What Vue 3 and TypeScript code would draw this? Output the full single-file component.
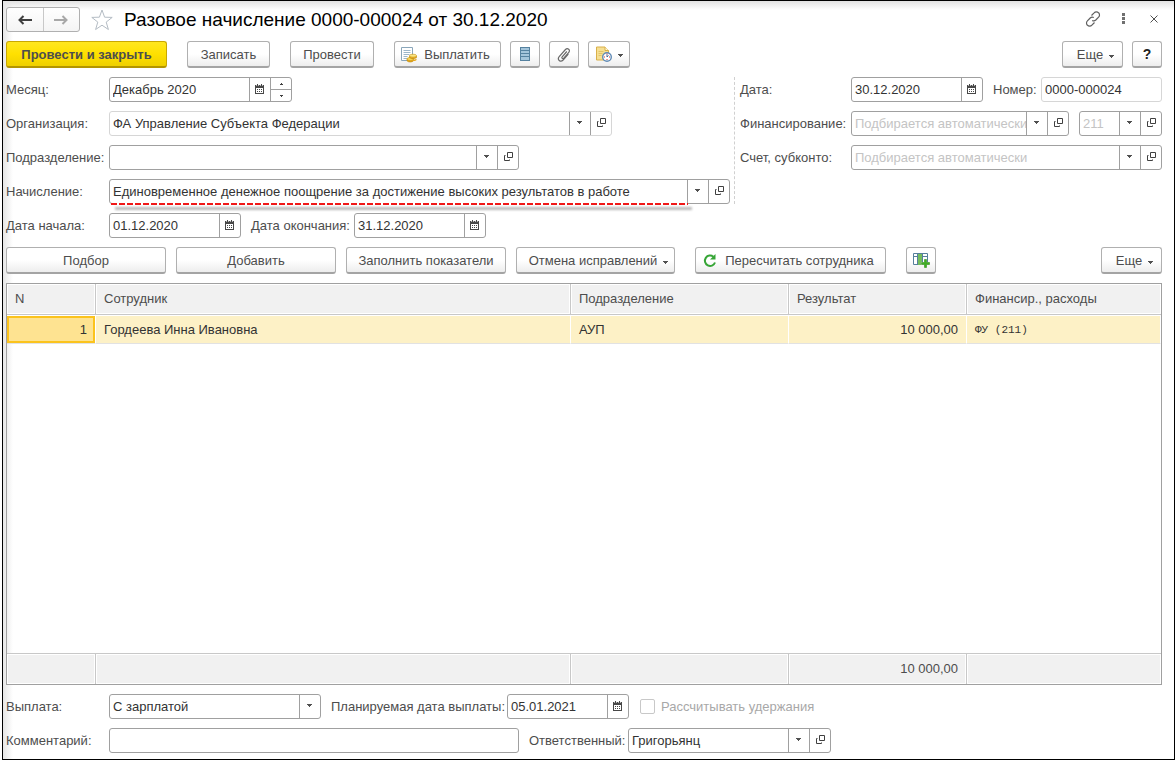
<script setup lang="ts">
import { ref } from 'vue'

interface Row {
  n: number
  employee: string
  department: string
  result: string
  financing: string
}

const rows: Row[] = [
  { n: 1, employee: 'Гордеева Инна Ивановна', department: 'АУП', result: '10 000,00', financing: 'ФУ (211)' },
]

const month = ref('Декабрь 2020')
const organization = ref('ФА Управление Субъекта Федерации')
const department = ref('')
const accrual = ref('Единовременное денежное поощрение за достижение высоких результатов в работе')
const startDate = ref('01.12.2020')
const endDate = ref('31.12.2020')
const docDate = ref('30.12.2020')
const docNumber = ref('0000-000024')
const payment = ref('С зарплатой')
const plannedDate = ref('05.01.2021')
const comment = ref('')
const responsible = ref('Григорьянц')
</script>

<template>
  <svg class="defs" aria-hidden="true">
    <symbol id="i-cal" viewBox="0 0 9 10">
      <path d="M0 1h9v9H0z M1 4v5h7V4z" fill="#484848" fill-rule="evenodd" />
      <path d="M2 0h1v2H2z M6 0h1v2H6z M2 5h1v1H2z M4 5h1v1H4z M6 5h1v1H6z M2 7h1v1H2z M4 7h1v1H4z M6 7h1v1H6z" fill="#484848" />
      <path d="M1 1h1v1H1z M3 1h1v1H3z M5 1h1v1H5z M7 1h1v1H7z" fill="#b8b8b8" />
    </symbol>
    <symbol id="i-open" viewBox="0 0 9 9">
      <path d="M3.500 .5h5v5h-5z M1.500 3.500h-1v5h5v-1" fill="none" stroke="#404040" />
    </symbol>
    <symbol id="i-down" viewBox="0 0 5 3">
      <path d="M0 0h5v1H4v1H3v1H2V2H1V1H0z" fill="#505050" />
    </symbol>
  </svg>
  <main class="window">
    <header class="title-bar">
      <div class="nav">
        <button type="button" aria-label="Назад">
          <svg width="14" height="10" viewBox="0 0 14 10"><path d="M1.500 5H14M5.500 1L1.500 5l4 4" fill="none" stroke="#404040" stroke-width="2" /></svg>
        </button>
        <button type="button" aria-label="Вперед">
          <svg width="14" height="10" viewBox="0 0 14 10"><path d="M0 5h12.500M8.500 1l4 4-4 4" fill="none" stroke="#a8a8a8" stroke-width="2" /></svg>
        </button>
      </div>
      <button type="button" class="plain star" aria-label="Избранное">
        <svg width="22" height="22" viewBox="0 0 22 22"><path d="M11 1l2.600 7.200 7.600.2-6 4.700 2.200 7.400L11 16.200l-6.400 4.300 2.200-7.400-6-4.700 7.600-.2z" fill="#fff" stroke="#b4bcc4" /></svg>
      </button>
      <h1>Разовое начисление 0000-000024 от 30.12.2020</h1>
      <div class="window-tools">
        <button type="button" class="plain" aria-label="Ссылка">
          <svg width="16" height="16" viewBox="0 0 16 16" fill="none" stroke="#606060" stroke-width="1.200"><path d="M6.500 4.500l2.600-2.700a3 3 0 0 1 4.500 0 3 3 0 0 1 0 4.300L10.800 9a3 3 0 0 1-3.600.4" /><path d="M9.500 11.500l-2.600 2.700a3 3 0 0 1-4.500 0 3 3 0 0 1 0-4.300L5.200 7a3 3 0 0 1 3.600-.4" /></svg>
        </button>
        <button type="button" class="plain" aria-label="Меню">
          <svg width="3" height="11" viewBox="0 0 3 11"><path d="M0 0h3v3H0z M0 4h3v3H0z M0 8h3v3H0z" fill="#707070" /></svg>
        </button>
        <button type="button" class="plain close" aria-label="Закрыть">
          <svg width="8" height="8" viewBox="0 0 8 8"><path d="M.5.5l7 7M7.500.5l-7 7" stroke="#505050" /></svg>
        </button>
      </div>
    </header>

    <div class="toolbar">
      <button type="button" class="btn primary">Провести и закрыть</button>
      <button type="button" class="btn mid">Записать</button>
      <button type="button" class="btn mid">Провести</button>
      <div class="group">
        <button type="button" class="btn pay">
          <svg width="16" height="16" viewBox="0 0 16 16">
            <path d="M.5 .5h11v13H.5z" fill="#fff" stroke="#8aa6ba" />
            <path d="M2.500 3.500h7M2.500 5.500h7M2.500 7.500h6M2.500 9.500h4M2.500 11.500h4" stroke="#9db7ca" />
            <path d="M6 12.300v1.500c1 1.600 5.500 1.600 6.500 0v-1.500z" fill="#e9a91c" stroke="#b98305" stroke-width=".6" />
            <ellipse cx="9.200" cy="12" rx="3.300" ry="1.400" fill="#fbdc62" stroke="#c48f0b" stroke-width=".6" />
            <path d="M8.500 9v1.500c1 1.500 6 1.500 7 0V9z" fill="#e9a91c" stroke="#b98305" stroke-width=".6" />
            <ellipse cx="12" cy="8.700" rx="3.500" ry="1.500" fill="#fce680" stroke="#c48f0b" stroke-width=".6" />
            <path d="M12.500 12.500c1.500 0 2.500-.4 3-1v1.500c-.5.800-1.500 1-3 1z" fill="#e9a91c" />
          </svg>
          <span>Выплатить</span>
        </button>
        <button type="button" class="btn icon" aria-label="Список">
          <svg width="10" height="14" viewBox="0 0 10 14"><path d="M0 0h10v14H0z" fill="#55819f" /><path d="M1 1h8v2H1z M1 4h8v2H1z M1 7h8v2H1z M1 10h8v3H1z" fill="#a3c4da" /></svg>
        </button>
        <button type="button" class="btn icon" aria-label="Файлы">
          <svg width="14" height="15" viewBox="0 0 14 15" fill="none" stroke="#6a6a6a" stroke-width="1.200"><path d="M9.800 4.500L5.200 9.800c-1 1.200.6 2.500 1.600 1.400l5-5.900c2-2.400-1.300-5-3.300-2.800L2.200 9.600c-2.400 3 1.300 6.200 3.900 3.400l5.200-6" /></svg>
        </button>
        <button type="button" class="btn report" aria-label="Отчеты">
          <svg width="16" height="16" viewBox="0 0 16 16">
            <path d="M.5 1h8.500l3.500 3.500v9.500H.5z" fill="#f6df92" stroke="#d9b04a" />
            <path d="M9 1v3.500h3.500" fill="#fff6d4" stroke="#d9b04a" />
            <path d="M2.500 5.500h5M2.500 7.500h4M2.500 9.500h3" stroke="#e2c468" />
            <circle cx="11" cy="11" r="4.300" fill="#fff" stroke="#5f8ab5" stroke-width="1.400" />
            <path d="M11 8.500V11l1.500-1.500" fill="none" stroke="#44699a" />
            <path d="M8 11h1M11 13v1M13 11h1M11 7.500v1" stroke="#e03030" />
          </svg>
          <svg class="arrow" width="5" height="3"><use href="#i-down" /></svg>
        </button>
      </div>
      <div class="group end">
        <button type="button" class="btn more">Еще <svg class="arrow" width="5" height="3"><use href="#i-down" /></svg></button>
        <button type="button" class="btn icon help">?</button>
      </div>
    </div>

    <div class="form">
      <div class="left">
        <div class="line">
          <label for="month">Месяц:</label>
          <div class="field w-month">
            <input id="month" v-model="month" type="text" />
            <button type="button" aria-label="Выбрать месяц"><svg width="9" height="10"><use href="#i-cal" /></svg></button>
            <div class="spin">
              <button type="button" aria-label="Больше"><svg width="3" height="2" viewBox="0 0 3 2"><path d="M1 0h1v1h1v1H0V1h1z" fill="#404040" /></svg></button>
              <button type="button" aria-label="Меньше"><svg width="3" height="2" viewBox="0 0 3 2"><path d="M0 0h3v1H2v1H1V1H0z" fill="#404040" /></svg></button>
            </div>
          </div>
        </div>
        <div class="line">
          <label for="org">Организация:</label>
          <div class="field light w-org">
            <input id="org" v-model="organization" type="text" />
            <button type="button" aria-label="Список организаций"><svg width="5" height="3"><use href="#i-down" /></svg></button>
            <button type="button" aria-label="Открыть организацию"><svg width="9" height="9"><use href="#i-open" /></svg></button>
          </div>
        </div>
        <div class="line">
          <label for="dep">Подразделение:</label>
          <div class="field w-dep">
            <input id="dep" v-model="department" type="text" />
            <button type="button" aria-label="Список подразделений"><svg width="5" height="3"><use href="#i-down" /></svg></button>
            <button type="button" aria-label="Открыть подразделение"><svg width="9" height="9"><use href="#i-open" /></svg></button>
          </div>
        </div>
        <div class="line">
          <label for="acc">Начисление:</label>
          <div class="field grow marked">
            <input id="acc" v-model="accrual" type="text" />
            <button type="button" aria-label="Список начислений"><svg width="5" height="3"><use href="#i-down" /></svg></button>
            <button type="button" aria-label="Открыть начисление"><svg width="9" height="9"><use href="#i-open" /></svg></button>
          </div>
        </div>
        <div class="line">
          <label for="start">Дата начала:</label>
          <div class="field w-date">
            <input id="start" v-model="startDate" type="text" />
            <button type="button" aria-label="Выбрать дату начала"><svg width="9" height="10"><use href="#i-cal" /></svg></button>
          </div>
          <label for="end" class="second end-label">Дата окончания:</label>
          <div class="field w-date">
            <input id="end" v-model="endDate" type="text" />
            <button type="button" aria-label="Выбрать дату окончания"><svg width="9" height="10"><use href="#i-cal" /></svg></button>
          </div>
        </div>
      </div>

      <div class="right">
        <div class="line">
          <label for="date">Дата:</label>
          <div class="field w-date">
            <input id="date" v-model="docDate" type="text" />
            <button type="button" aria-label="Выбрать дату"><svg width="9" height="10"><use href="#i-cal" /></svg></button>
          </div>
          <label for="num" class="second num-label">Номер:</label>
          <div class="field light grow"><input id="num" v-model="docNumber" type="text" /></div>
        </div>
        <div class="line">
          <label for="fin">Финансирование:</label>
          <div class="field grow">
            <input id="fin" type="text" placeholder="Подбирается автоматически" />
            <button type="button" aria-label="Список финансирования"><svg width="5" height="3"><use href="#i-down" /></svg></button>
            <button type="button" aria-label="Открыть финансирование"><svg width="9" height="9"><use href="#i-open" /></svg></button>
          </div>
          <div class="field w-code">
            <input type="text" placeholder="211" aria-label="Код расходов" />
            <button type="button" aria-label="Список кодов"><svg width="5" height="3"><use href="#i-down" /></svg></button>
            <button type="button" aria-label="Открыть код"><svg width="9" height="9"><use href="#i-open" /></svg></button>
          </div>
        </div>
        <div class="line">
          <label for="account">Счет, субконто:</label>
          <div class="field grow">
            <input id="account" type="text" placeholder="Подбирается автоматически" />
            <button type="button" aria-label="Список счетов"><svg width="5" height="3"><use href="#i-down" /></svg></button>
            <button type="button" aria-label="Открыть счет"><svg width="9" height="9"><use href="#i-open" /></svg></button>
          </div>
        </div>
      </div>
    </div>

    <div class="toolbar">
      <div class="group commands">
        <button type="button" class="btn wide">Подбор</button>
        <button type="button" class="btn wide">Добавить</button>
        <button type="button" class="btn wide">Заполнить показатели</button>
        <button type="button" class="btn cancel">Отмена исправлений <svg class="arrow" width="5" height="3"><use href="#i-down" /></svg></button>
      </div>
      <button type="button" class="btn recalc">
        <svg width="14" height="14" viewBox="0 0 14 14"><path d="M10.500 2.800A5.200 5.200 0 1 0 12 8.500" fill="none" stroke="#36a536" stroke-width="2" /><path d="M12.500 0v5.500H7z" fill="#36a536" /></svg>
        <span>Пересчитать сотрудника</span>
      </button>
      <button type="button" class="btn icon" aria-label="Добавить колонку">
        <svg width="17" height="15" viewBox="0 0 17 15">
          <path d="M.5 .5h14v11H.5z" fill="#fff" stroke="#56809c" />
          <path d="M1 3.500h13" stroke="#56809c" />
          <path d="M5 1h4v11H5z" fill="#74bd5c" />
          <path d="M4.500 1v11M9.500 1v11" stroke="#56809c" />
          <path d="M11 6h3v3h3v3h-3v3h-3v-3H8V9h3z" fill="#fff" />
          <path d="M11.500 6.500h2v3h3v2h-3v3h-2v-3h-3v-2h3z" fill="#3fae22" stroke="#2c8f17" stroke-width=".6" />
        </svg>
      </button>
      <div class="group end">
        <button type="button" class="btn more">Еще <svg class="arrow" width="5" height="3"><use href="#i-down" /></svg></button>
      </div>
    </div>

    <div class="table-box">
      <table>
        <colgroup>
          <col class="c-n" /><col /><col class="c-dep" /><col class="c-res" /><col class="c-fin" />
        </colgroup>
        <thead>
          <tr><th>N</th><th>Сотрудник</th><th>Подразделение</th><th>Результат</th><th>Финансир., расходы</th></tr>
        </thead>
        <tbody>
          <tr v-for="row in rows" :key="row.n" class="data">
            <td class="num current">{{ row.n }}</td>
            <td>{{ row.employee }}</td>
            <td>{{ row.department }}</td>
            <td class="num">{{ row.result }}</td>
            <td class="mono">{{ row.financing }}</td>
          </tr>
          <tr class="filler"><td colspan="5"></td></tr>
        </tbody>
        <tfoot>
          <tr><td></td><td></td><td></td><td class="num">10 000,00</td><td></td></tr>
        </tfoot>
      </table>
    </div>

    <div class="bottom">
      <div class="line">
        <label for="pay">Выплата:</label>
        <div class="field w-pay">
          <select id="pay" v-model="payment"><option>С зарплатой</option></select>
          <span class="cell"><svg width="5" height="3"><use href="#i-down" /></svg></span>
        </div>
        <label for="plan" class="second plan-label">Планируемая дата выплаты:</label>
        <div class="field w-plan">
          <input id="plan" v-model="plannedDate" type="text" />
          <button type="button" aria-label="Выбрать дату выплаты"><svg width="9" height="10"><use href="#i-cal" /></svg></button>
        </div>
        <label class="check"><input type="checkbox" disabled /><span>Рассчитывать удержания</span></label>
      </div>
      <div class="line">
        <label for="comment">Комментарий:</label>
        <div class="field w-dep"><input id="comment" v-model="comment" type="text" /></div>
        <label for="resp" class="second resp-label">Ответственный:</label>
        <div class="field w-resp">
          <input id="resp" v-model="responsible" type="text" />
          <button type="button" aria-label="Список сотрудников"><svg width="5" height="3"><use href="#i-down" /></svg></button>
          <button type="button" aria-label="Открыть сотрудника"><svg width="9" height="9"><use href="#i-open" /></svg></button>
        </div>
      </div>
    </div>
  </main>
</template>

<style>
body {
  margin: 0;
  background: #fff;
}
</style>

<style scoped>
* {
  box-sizing: border-box;
}
.defs {
  position: absolute;
  width: 0;
  height: 0;
}
.window {
  display: flex;
  flex-direction: column;
  height: 100vh;
  margin-left: 2px;
  padding: 6px 12px 6px 3px;
  border: 1px solid #000;
  background:
    linear-gradient(to right, #e6e6e6, #fff0 10px),
    linear-gradient(to bottom, #e2e2e2, #fff0 9px),
    #fff;
  color: #4d4d4d;
  font: 13px/16px "Liberation Sans", Arial, sans-serif;
}
button,
input,
select {
  font: inherit;
  color: inherit;
}
button {
  display: flex;
  align-items: center;
  justify-content: center;
  padding: 0;
  border: 0;
  background: none;
}
svg {
  flex: none;
}
.title-bar {
  display: flex;
  align-items: center;
  height: 25px;
}
.nav {
  display: flex;
  width: 74px;
  height: 25px;
  border: 1px solid #b0b0b0;
  border-radius: 3px;
  background: linear-gradient(#fff, #f4f4f4);
}
.nav button {
  flex: 1;
}
.nav button + button {
  border-left: 1px solid #c8c8c8;
}
.star {
  margin: 0 11px;
}
h1 {
  margin: 0;
  color: #000;
  font-size: 19px;
  line-height: 25px;
  font-weight: 400;
}
.window-tools {
  display: flex;
  align-items: center;
  gap: 21px;
  margin-left: auto;
  padding: 0 4px 2px 0;
}
.close {
  margin-left: 4px;
}
.toolbar {
  display: flex;
  gap: 20px;
  margin-top: 9px;
}
.group {
  display: flex;
  gap: 9px;
}
.commands {
  gap: 10px;
}
.end {
  margin-left: auto;
}
.btn {
  height: 27px;
  padding-top: 2px;
  border: 1px solid #b0b0b0;
  border-bottom: 2px solid #a4a4a4;
  border-radius: 3px;
  background: linear-gradient(#fff 50%, #ededed);
  font-size: 13px;
  white-space: nowrap;
}
.primary {
  width: 161px;
  border-color: #c9a800 #c9a800 #b39500;
  background: linear-gradient(#ffe71f, #ffe000 50%, #efd000);
  font-weight: 700;
}
.mid {
  width: 83px;
}
.mid + .mid {
  width: 84px;
}
.pay {
  width: 107px;
  padding-right: 4px;
  gap: 7px;
}
.icon {
  width: 30px;
  padding-top: 0;
}
.report {
  width: 42px;
  padding-top: 0;
}
.more {
  width: 61px;
  padding-left: 6px;
}
.arrow {
  margin: 2px 0 0 6px;
}
.help {
  color: #222;
  font-size: 14px;
  font-weight: 700;
}
.wide {
  width: 160px;
}
.cancel {
  width: 159px;
  padding-left: 6px;
}
.recalc {
  width: 191px;
  padding-right: 4px;
  gap: 8px;
}
.form {
  display: flex;
  align-items: flex-start;
  gap: 4px;
  margin-top: 9px;
}
.left,
.right,
.bottom {
  display: flex;
  flex-direction: column;
  gap: 9px;
}
.left {
  flex: 1;
}
.right {
  width: 428px;
  min-height: 127px;
  padding-left: 5px;
  border-left: 1px dashed #d0d0d0;
}
.line {
  display: flex;
  align-items: center;
  height: 25px;
}
.line > label {
  flex: none;
  width: 103px;
  white-space: nowrap;
}
.right .line > label {
  width: 111px;
}
.line > .second,
.right .line > .second {
  margin-left: 10px;
}
.line > .end-label {
  width: 103px;
}
.right .line > .num-label {
  width: 48px;
}
.line > .plan-label {
  width: 176px;
}
.line > .resp-label {
  width: 99px;
}
.field {
  position: relative;
  display: flex;
  height: 25px;
  border: 1px solid #a0a0a0;
  border-radius: 3px;
  background: #fff;
  color: #333;
}
.light {
  border-color: #d6d6d6;
}
.field input,
.field select {
  flex: 1;
  min-width: 0;
  width: 0;
  padding: 0 0 0 3px;
  border: 0;
  outline: 0;
  background: none;
  appearance: none;
}
.field input::placeholder {
  color: #c4c4c4;
  opacity: 1;
}
.field > button,
.field > .cell,
.spin {
  display: flex;
  align-items: center;
  justify-content: center;
  flex: none;
  width: 21px;
  border-left: 1px solid #a0a0a0;
}
.field > button,
.field > .cell {
  padding: 0 2px 2px 0;
}
.field > button + button {
  padding-right: 0;
}
.spin {
  flex-direction: column;
  align-items: stretch;
}
.spin button {
  flex: 1;
}
.spin button + button {
  border-top: 1px solid #a0a0a0;
}
.grow {
  flex: 1;
}
.w-month {
  width: 183px;
}
.w-org {
  width: 503px;
}
.w-dep {
  width: 410px;
}
.w-date {
  width: 132px;
}
.w-code {
  width: 83px;
  margin-left: 10px;
}
.w-pay {
  width: 212px;
}
.w-plan {
  width: 122px;
}
.w-resp {
  width: 203px;
}
.marked::before,
.marked::after {
  content: "";
  position: absolute;
  pointer-events: none;
}
.marked::before {
  left: 5px;
  right: 37px;
  bottom: -7px;
  height: 3px;
  background: #0004;
  filter: blur(1px);
}
.marked::after {
  left: 1px;
  right: 41px;
  bottom: -2px;
  height: 2px;
  background: repeating-linear-gradient(to right, #f01818 0 6px, #fff 6px 8px);
}
.table-box {
  flex: 1;
  min-height: 120px;
  margin-top: 9px;
  border: 1px solid #a0a0a0;
}
table {
  width: 100%;
  height: 100%;
  border-collapse: separate;
  border-spacing: 0;
  table-layout: fixed;
}
.c-n {
  width: 89px;
}
.c-dep {
  width: 218px;
}
.c-res {
  width: 178px;
}
.c-fin {
  width: 194px;
}
th,
td {
  padding: 0 8px;
  text-align: left;
  font-weight: 400;
  white-space: nowrap;
}
th,
tfoot td {
  height: 31px;
  border-right: 1px solid #c8c8c8;
  background: #f1f1f1;
  box-shadow: inset 0 0 0 1px #fff;
}
th {
  border-bottom: 1px solid #c8c8c8;
}
tfoot td {
  border-top: 1px solid #c8c8c8;
}
th:last-child,
tfoot td:last-child {
  border-right: 0;
}
.data td {
  height: 29px;
  border-top: 1px solid #fff;
  border-right: 1px solid #fff;
  border-bottom: 1px solid #e2e2e2;
  background: #fdf1c6;
  color: #333;
}
.data .current {
  background: #fee391;
  box-shadow: inset 0 0 0 2px #fbc31d;
}
.num,
.data .num {
  text-align: right;
}
.mono {
  font: 11px/16px "Liberation Mono", monospace;
}
.filler {
  height: 100%;
}
.bottom {
  margin-top: 9px;
}
.line > .check {
  display: flex;
  align-items: center;
  gap: 6px;
  width: auto;
  margin-left: 11px;
  color: #a8a8a8;
}
.check input {
  flex: none;
  width: 15px;
  height: 15px;
  margin: 0;
  border: 1px solid #c8c8c8;
  border-radius: 2px;
  background: #fff;
  appearance: none;
}
</style>
